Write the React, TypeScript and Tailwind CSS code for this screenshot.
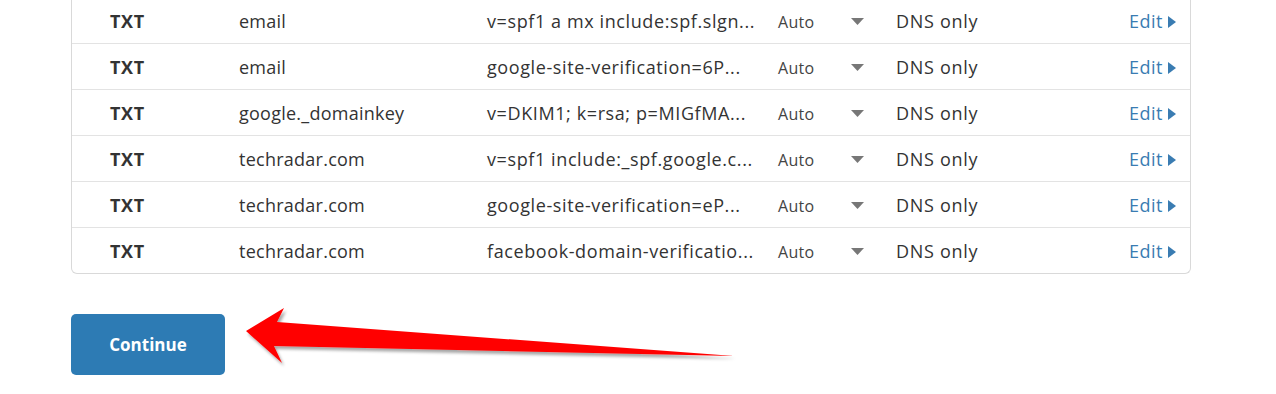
const records = [
  { type: 'TXT', name: 'email', content: 'v=spf1 a mx include:spf.slgn...' },
  { type: 'TXT', name: 'email', content: 'google-site-verification=6P...' },
  { type: 'TXT', name: 'google._domainkey', content: 'v=DKIM1; k=rsa; p=MIGfMA...' },
  { type: 'TXT', name: 'techradar.com', content: 'v=spf1 include:_spf.google.c...' },
  { type: 'TXT', name: 'techradar.com', content: 'google-site-verification=eP...' },
  { type: 'TXT', name: 'techradar.com', content: 'facebook-domain-verificatio...' },
]

function Caret() {
  return (
    <svg width="13" height="7" viewBox="0 0 13 7">
      <path d="M0 0 H13 L6.5 7 Z" fill="#777" />
    </svg>
  )
}

function RecordRow({ type, name, content, last }: { type: string; name: string; content: string; last: boolean }) {
  return (
    <div className={`flex items-center pt-[2px] ${last ? 'h-[45px]' : 'h-[46px] border-b border-[#e3e3e3]'}`}>
      <div className="w-[167px] pl-[38px] text-[18px] font-bold tracking-[0.6px] text-[#333]">{type}</div>
      <div className="w-[248px] text-[18px] tracking-[0.25px] text-[#333]">{name}</div>
      <div className="w-[291px] whitespace-nowrap text-[18px] tracking-[0.6px] text-[#333]">{content}</div>
      <div className="w-[73px] text-[16px] tracking-[0.3px] text-[#444]">Auto</div>
      <div className="flex w-[45px] items-center">
        <Caret />
      </div>
      <div className="flex-1 text-[18px] tracking-[0.7px] text-[#333]">DNS only</div>
      <div className="flex items-center gap-[5px] pr-[14px] text-[18px] tracking-[0.5px] text-[#3a7cb2]">
        <span>Edit</span>
        <svg width="8" height="12" viewBox="0 0 8 12">
          <path d="M0 0 L8 6 L0 12 Z" fill="#3a7cb2" />
        </svg>
      </div>
    </div>
  )
}

function Arrow() {
  return (
    <svg
      className="pointer-events-none absolute left-0 top-0"
      width="1276"
      height="394"
      viewBox="0 0 1276 394"
    >
      <defs>
        <filter id="shadow" x="-10%" y="-50%" width="120%" height="200%">
          <feDropShadow dx="2" dy="3" stdDeviation="1.5" floodColor="#000" floodOpacity="0.35" />
        </filter>
      </defs>
      <polygon
        points="246,331 284,308 277,322 734,356 274,346 282,363"
        fill="#ff0000"
        filter="url(#shadow)"
      />
    </svg>
  )
}

export default function App() {
  return (
    <div
      className="relative h-[394px] w-[1276px] overflow-hidden bg-white"
      style={{ fontFamily: '"Open Sans", "Noto Sans", sans-serif' }}
    >
      <div className="px-[71px]">
        <div className="-mt-[2px] w-[1120px] rounded-b-[6px] border border-t-0 border-[#d9d9d9]">
          {records.map((r, i) => (
            <RecordRow key={i} {...r} last={i === records.length - 1} />
          ))}
        </div>
        <button className="mt-[40px] flex h-[61px] w-[154px] items-center justify-center rounded-[5px] bg-[#2d7bb4] text-[17px] font-bold text-white">
          Continue
        </button>
      </div>
      <Arrow />
    </div>
  )
}
